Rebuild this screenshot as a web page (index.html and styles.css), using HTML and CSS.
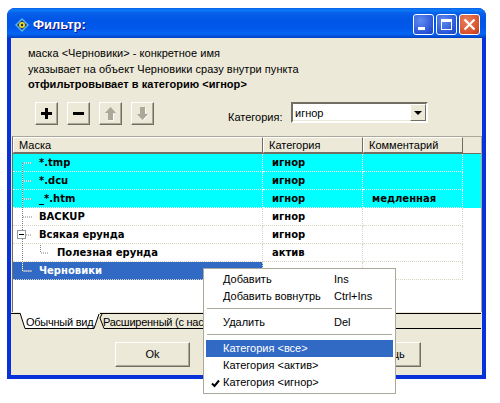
FILE: index.html
```html
<!DOCTYPE html>
<html lang="ru">
<head>
    <meta charset="UTF-8">
    <title>Фильтр</title>
    <link rel="stylesheet" href="styles.css">
</head>
<body>
    <div class="window">
        <div class="titlebar">
            <svg class="app-icon" width="16" height="16" viewBox="0 0 16 16">
                <path d="M8 1 L15 8 L8 15 L1 8 Z" fill="#5fb4e8"/>
                <path d="M8 3 L13 8 L8 13 L3 8 Z" fill="#0a3f8a"/>
                <circle cx="8" cy="8" r="3" fill="#f5d422"/>
                <circle cx="8" cy="8" r="1.2" fill="#17305c"/>
            </svg>
            <span class="title">Фильтр:</span>
            <div class="win-buttons">
                <div class="win-btn">
                    <svg width="19" height="19" viewBox="0 0 19 19"><rect x="4" y="12" width="7" height="3" fill="#fff"/></svg>
                </div>
                <div class="win-btn">
                    <svg width="19" height="19" viewBox="0 0 19 19"><path d="M4 4 H15 V15 H4 Z M5 7 V14 H14 V7 Z" fill="#fff" fill-rule="evenodd"/></svg>
                </div>
                <div class="win-btn close">
                    <svg width="19" height="19" viewBox="0 0 19 19"><path d="M4.5 4.5 L14.5 14.5 M14.5 4.5 L4.5 14.5" stroke="#fff" stroke-width="2.2"/></svg>
                </div>
            </div>
        </div>

        <div class="client">
            <div class="info">
                <div>маска &lt;Черновики&gt; - конкретное имя</div>
                <div>указывает на объект Черновики сразу внутри пункта</div>
                <div class="bold">отфильтровывает в категорию &lt;игнор&gt;</div>
            </div>

            <div class="toolbar">
                <div class="tool-btn">
                    <svg width="13" height="13" viewBox="0 0 13 13"><path d="M5 1 H8 V5 H12 V8 H8 V12 H5 V8 H1 V5 H5 Z" fill="#000"/></svg>
                </div>
                <div class="tool-btn">
                    <svg width="13" height="13" viewBox="0 0 13 13"><rect x="1" y="5" width="11" height="3" fill="#000"/></svg>
                </div>
                <div class="tool-btn">
                    <svg width="13" height="15" viewBox="0 0 13 15"><path d="M6.5 1 L12 7 H9 V14 H4 V7 H1 Z" fill="#aca899"/><path d="M9.5 8 V15 M4 15 H10" stroke="#fff"/></svg>
                </div>
                <div class="tool-btn">
                    <svg width="13" height="15" viewBox="0 0 13 15"><path d="M6.5 14 L12 8 H9 V1 H4 V8 H1 Z" fill="#aca899"/><path d="M9.5 2 V7 M7 14.5 L12.5 8.5" stroke="#fff"/></svg>
                </div>
                <label class="cat-label">Категория:</label>
                <div class="combo">
                    <span class="combo-value">игнор</span>
                    <div class="combo-btn"><span class="arrow"></span></div>
                </div>
            </div>

            <div class="grid">
                <div class="grid-head">
                    <div class="hcell col-mask">Маска</div>
                    <div class="hcell col-cat">Категория</div>
                    <div class="hcell col-note">Комментарий</div>
                </div>
                <div class="grid-body">
                    <div class="row cyan">
                        <div class="cell col-mask lvl1">*.tmp</div>
                        <div class="cell col-cat">игнор</div>
                        <div class="cell col-note"></div>
                    </div>
                    <div class="row cyan">
                        <div class="cell col-mask lvl1">*.dcu</div>
                        <div class="cell col-cat">игнор</div>
                        <div class="cell col-note"></div>
                    </div>
                    <div class="row cyan">
                        <div class="cell col-mask lvl1">_*.htm</div>
                        <div class="cell col-cat">игнор</div>
                        <div class="cell col-note">медленная</div>
                    </div>
                    <div class="row">
                        <div class="cell col-mask lvl1">BACKUP</div>
                        <div class="cell col-cat">игнор</div>
                        <div class="cell col-note"></div>
                    </div>
                    <div class="row">
                        <div class="cell col-mask lvl1">Всякая ерунда</div>
                        <div class="cell col-cat">игнор</div>
                        <div class="cell col-note"></div>
                    </div>
                    <div class="row">
                        <div class="cell col-mask lvl2">Полезная ерунда</div>
                        <div class="cell col-cat">актив</div>
                        <div class="cell col-note"></div>
                    </div>
                    <div class="row selected">
                        <div class="cell col-mask lvl1">Черновики</div>
                        <div class="cell col-cat"></div>
                        <div class="cell col-note"></div>
                    </div>

                    <!-- tree lines over the first column -->
                    <svg class="tree-lines" width="60" height="126" viewBox="0 0 60 126">
                        <path d="M9.5 9 V117 M10 9 H19 M10 27 H19 M10 45 H19 M10 117 H19" stroke="#fff" fill="none"/>
                        <path d="M9.5 9 V117 M10 9 H19 M10 27 H19 M10 45 H19 M10 63 H19 M13 81 H19 M10 117 H19 M27.5 91 V99 M28 99 H36" stroke="#808080" fill="none" stroke-dasharray="1 1"/>
                        <rect x="4.5" y="76.5" width="8" height="8" fill="#fff" stroke="#919b9c"/>
                        <path d="M6 80.5 H11" stroke="#000"/>
                    </svg>
                </div>
            </div>

            <div class="tabs">
                <svg class="tab-shapes" width="470" height="18" viewBox="0 0 470 18">
                    <path d="M89 1.5 H470 M0 1.5 H9" stroke="#000" fill="none"/>
                    <path d="M9 0 L14 16.5 H83 L88 1 V0 Z" fill="#fff"/>
                    <path d="M9 1 L14 16.5 H83 L88 2" stroke="#000" fill="none"/>
                    <path d="M91 2 L89 6 L93 16.5 H470" stroke="#000" fill="none"/>
                </svg>
                <div class="tab tab-first">Обычный вид</div>
                <div class="tab tab-second">Расширенный (с настройками)</div>
            </div>

            <div class="actions">
                <div class="btn btn-ok">Ok</div>
                <div class="btn btn-help">Помощь</div>
            </div>
        </div>
    </div>

    <div class="menu">
        <div class="menu-item"><span class="menu-text">Добавить</span><span>Ins</span></div>
        <div class="menu-item"><span class="menu-text">Добавить вовнутрь</span><span>Ctrl+Ins</span></div>
        <div class="menu-sep"></div>
        <div class="menu-item"><span class="menu-text">Удалить</span><span>Del</span></div>
        <div class="menu-sep"></div>
        <div class="menu-item hot"><span class="menu-text">Категория &lt;все&gt;</span></div>
        <div class="menu-item"><span class="menu-text">Категория &lt;актив&gt;</span></div>
        <div class="menu-item">
            <svg class="check" width="9" height="9" viewBox="0 0 9 9"><path d="M1 4.5 L3.5 7 L8 1.5" stroke="#000" stroke-width="2" fill="none"/></svg>
            <span class="menu-text">Категория &lt;игнор&gt;</span>
        </div>
    </div>
</body>
</html>
```

FILE: styles.css
```css
body {
    margin: 0;
    background-color: #ffffff;
    font-family: "Liberation Sans", Arial, sans-serif;
    font-size: 11px;
    color: #000;
    position: relative;
    height: 403px;
    overflow: hidden;
}
.window {
    width: 479px;
    height: 371px;
    margin: 8px 0 0 7px;
    position: absolute;
    box-sizing: border-box;
    background: #0831d9;
    border-radius: 8px 8px 0 0;
    display: flex;
    flex-direction: column;
}
.titlebar {
    height: 30px;
    box-sizing: border-box;
    flex: none;
    display: flex;
    align-items: center;
    padding: 3px 6px 0 7px;
    border-radius: 8px 8px 0 0;
    background: linear-gradient(to bottom, #0a5fe8 0, #0a7bf5 2px, #0760ea 5px, #0055e5 12px, #0058ea 20px, #0565f2 26px, #0047cf 29px, #0040c0 30px);
}
.app-icon {
    flex: none;
}
.title {
    margin-left: 3px;
    color: #fff;
    font-weight: bold;
    font-size: 13px;
    text-shadow: 1px 1px 0 #0f1089;
}
.win-buttons {
    margin-left: auto;
    display: flex;
    gap: 2px;
}
.win-btn {
    width: 19px;
    height: 19px;
    border: 1px solid #fff;
    border-radius: 3px;
    background: radial-gradient(circle at 35% 30%, #5f8cf0, #2a55d8 70%, #1c3fc0);
}
.win-btn.close {
    background: radial-gradient(circle at 35% 30%, #e8805c, #d8512c 70%, #b8341a);
}
.win-btn svg {
    display: block;
}
.client {
    flex: 1;
    margin: 0 4px 4px;
    background: #ece9d8;
    position: relative;
    min-height: 0;
}
.info {
    padding: 8px 0 0 17px;
    line-height: 15.5px;
    letter-spacing: 0.04px;
}
.bold {
    font-weight: bold;
}
.toolbar {
    display: flex;
    align-items: flex-start;
    height: 23px;
    margin-top: 9.5px;
    padding-left: 24px;
}
.tool-btn {
    width: 23px;
    height: 23px;
    box-sizing: border-box;
    margin-right: 9px;
    display: flex;
    align-items: center;
    justify-content: center;
    background: #ece9d8;
    border: 1px solid;
    border-color: #fff #716f64 #716f64 #fff;
    box-shadow: inset -1px -1px 0 #aca899;
}
.cat-label {
    margin: 9px 0 0 65px;
    width: 63px;
}
.combo {
    width: 137px;
    height: 21px;
    box-sizing: border-box;
    display: flex;
    align-items: center;
    background: #fff;
    border: 2px solid;
    border-color: #716f64 #fff #fff #716f64;
    box-shadow: inset -1px -1px 0 #ece9d8;
}
.combo-value {
    flex: 1;
    padding: 1px 0 0 2px;
}
.combo-btn {
    width: 16px;
    height: 17px;
    box-sizing: border-box;
    display: flex;
    align-items: center;
    justify-content: center;
    background: #ece9d8;
    border: 1px solid;
    border-color: #fff #716f64 #716f64 #fff;
}
.arrow {
    border-left: 4px solid transparent;
    border-right: 4px solid transparent;
    border-top: 4px solid #000;
}
.grid {
    margin: 11px 0 0 1px;
    height: 175px;
    border-left: 1px solid #716f64;
    border-top: 1px solid #aca899;
    border-right: 1px solid #aca899;
    background: #fff;
    overflow: hidden;
}
.grid-head {
    display: flex;
    height: 16px;
    background: #ece9d8;
    border-bottom: 1px solid #716f64;
}
.hcell {
    box-sizing: border-box;
    height: 16px;
    line-height: 15px;
    padding-left: 5px;
    border: 1px solid;
    border-color: #fff #716f64 #716f64 #fff;
}
.col-mask {
    width: 250px;
    flex: none;
}
.col-cat {
    width: 100px;
    flex: none;
}
.col-note {
    width: 100px;
    flex: none;
}
.grid-body {
    position: relative;
}
.row {
    display: flex;
    height: 18px;
}
.row.cyan {
    background: #00ffff;
}
.cell {
    box-sizing: border-box;
    height: 18px;
    line-height: 18px;
    padding-left: 9px;
    border-right: 1px dotted #d8d5c4;
    border-bottom: 1px dotted #d8d5c4;
    font-family: "DejaVu Sans", sans-serif;
    font-weight: bold;
    font-size: 10px;
    white-space: nowrap;
    overflow: hidden;
}
.cyan .cell {
    border-color: #fff;
}
.selected .col-mask {
    background: #316ac5;
    color: #fff;
}
.lvl1 {
    padding-left: 26px;
}
.lvl2 {
    padding-left: 44px;
}
.tree-lines {
    position: absolute;
    left: 0;
    top: 0;
}
.tabs {
    display: flex;
    height: 18px;
    position: relative;
}
.tab-shapes {
    position: absolute;
    left: 0;
    top: 0;
}
.tab {
    position: relative;
    line-height: 20px;
    white-space: nowrap;
    letter-spacing: -0.25px;
    overflow: hidden;
}
.tab-first {
    width: 77px;
    margin-left: 15px;
}
.tab-second {
    width: 100px;
}
.actions {
    display: flex;
    margin-top: 12px;
    padding-left: 104px;
}
.btn {
    width: 75px;
    height: 25px;
    box-sizing: border-box;
    line-height: 22px;
    text-align: center;
    background: #ece9d8;
    border: 1px solid;
    border-color: #fff #716f64 #716f64 #fff;
    box-shadow: inset -1px -1px 0 #aca899;
}
.btn-help {
    margin-left: 156px;
}
.menu {
    position: absolute;
    left: 203px;
    top: 268px;
    width: 193px;
    height: 126px;
    box-sizing: border-box;
    padding: 2px;
    background: #fff;
    border: 1px solid #aca899;
}
.menu-item {
    height: 17px;
    line-height: 17px;
    display: flex;
    position: relative;
}
.menu-text {
    width: 111px;
    padding-left: 17px;
    white-space: nowrap;
}
.menu-item.hot {
    background: #316ac5;
    color: #fff;
}
.menu-sep {
    height: 1px;
    background: #aca899;
    margin: 3px 1px 5px 1px;
}
.check {
    position: absolute;
    left: 5px;
    top: 5px;
}
```
